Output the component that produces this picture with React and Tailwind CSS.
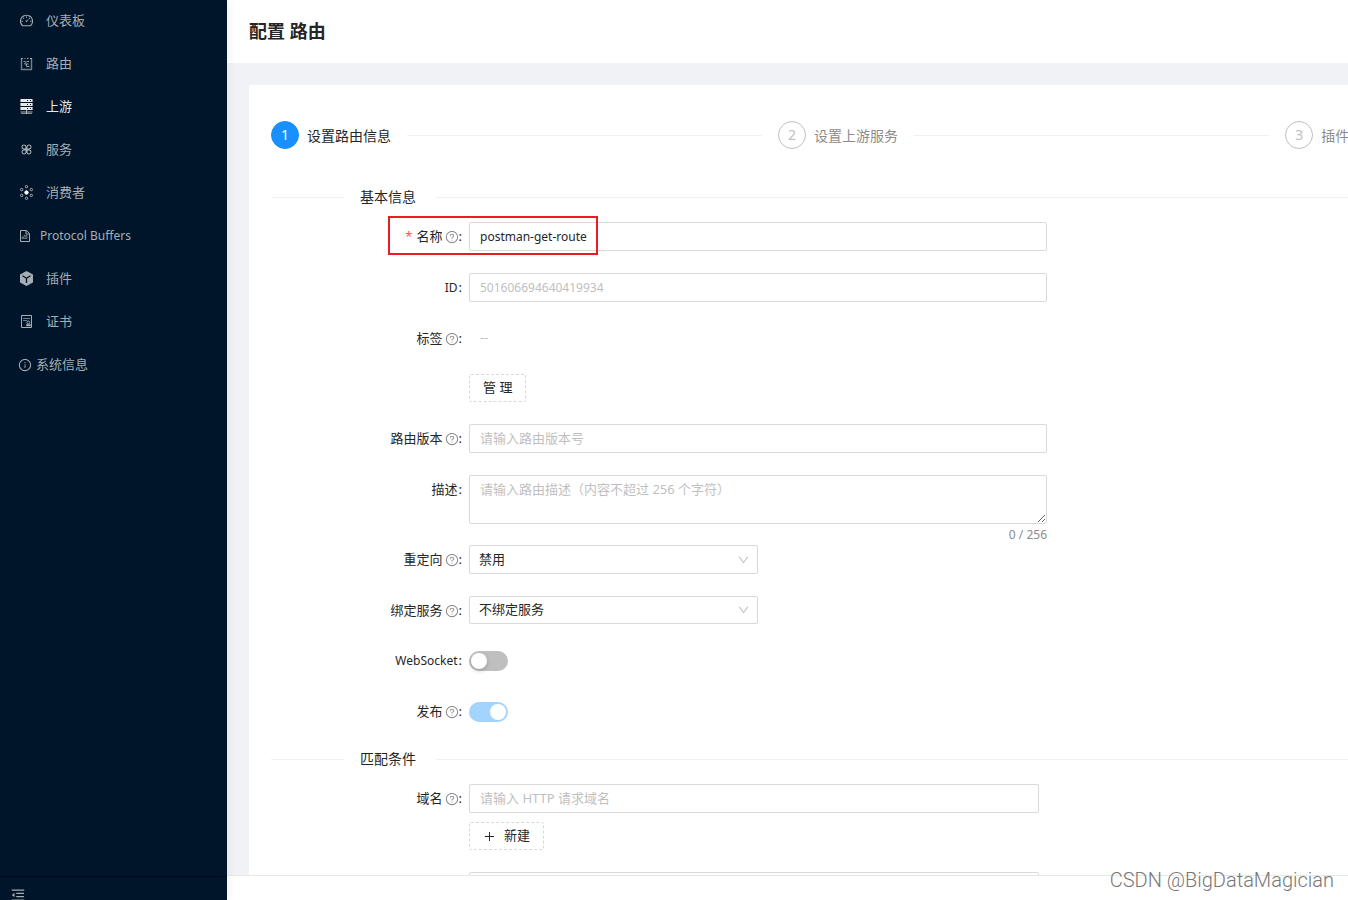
import { useState } from 'react'
import {
    AiOutlineDashboard,
    AiOutlineDown,
    AiOutlineInfoCircle,
    AiOutlineMenuFold,
    AiOutlinePlus,
    AiOutlineQuestionCircle,
} from 'react-icons/ai'

const inputClass = 'block h-[29px] w-full rounded-xs border border-[#d9d9d9] bg-white px-2.5 text-[#262626] placeholder-[#bfbfbf] outline-none focus:border-[#40a9ff]'

function RouteIcon() {
    return (
        <svg width="13" height="14" viewBox="0 0 13 14" fill="none" stroke="currentColor">
            <path d="M1.5 1v12M11.5 1v12M1 12.500h11" strokeWidth="1.4" opacity="0.7" />
            <path d="M1 1.5h2M4.500 1.500h1M7 1.5h1.500M10 1.5h2" />
            <path d="M9 4.5H7L4.500 7H8.500M6.500 7v2.5h3M3.500 4.5h2" strokeWidth="0.9" />
        </svg>
    )
}

function UpstreamIcon() {
    return (
        <svg width="13" height="16" viewBox="0 0 13 16" fill="currentColor">
            <path fillRule="evenodd" d="M1 0h11a.6.6 0 0 1 .6.6V3H.4V.6A.6.6 0 0 1 1 0zM7 1v1h1V1zM10 1v1h1V1z" />
            <path fillRule="evenodd" d="M.4 4h12.200v3H.4zM7 5v1h1V5zM10 5v1h1V5z" />
            <path fillRule="evenodd" d="M.4 8h12.200v3H.4zM7 9v1h1V9zM10 9v1h1V9z" />
            <path d="M6 11h1v1.600h5.500v.8H7v1.100H6v-1.100H.5v-.8H6zM1 14.200h11v.8H1z" opacity="0.75" />
        </svg>
    )
}

function ServiceIcon() {
    return (
        <svg width="13" height="13" viewBox="0 0 13 13" fill="none" stroke="currentColor" strokeWidth="1.1">
            <path d="M6 6H3.700A2 2 0 1 1 6 4zM7 6V4a2 2 0 1 1 2.300 2zM6 7v2.300A2 2 0 1 1 3.700 7zM7 7h2.300A2 2 0 1 1 7 9.300z" />
        </svg>
    )
}

function ConsumerIcon() {
    return (
        <svg width="13" height="15" viewBox="0 0 13 15" fill="none" stroke="currentColor" strokeWidth="1">
            <circle cx="6.500" cy="7.500" r="1.700" fill="#fff" stroke="#fff" />
            <circle cx="6.500" cy="1.700" r="1.200" />
            <circle cx="6.500" cy="13.300" r="1.200" />
            <circle cx="1.700" cy="4.600" r="1.200" />
            <circle cx="11.300" cy="4.600" r="1.200" />
            <circle cx="1.700" cy="10.400" r="1.200" />
            <circle cx="11.300" cy="10.400" r="1.200" />
        </svg>
    )
}

function ProtoIcon() {
    return (
        <svg width="10" height="12" viewBox="0 0 10 12" fill="none" stroke="currentColor">
            <path d="M.5.5h6l3 3v8h-9z" />
            <path d="M6 .5V4h3.500" />
            <path d="M2 8.500V7h2V5.500h3v3H2" fill="currentColor" fillOpacity="0.3" strokeOpacity="0.5" />
        </svg>
    )
}

function PluginIcon() {
    return (
        <svg width="13" height="15" viewBox="0 0 13 15">
            <path d="M6.500 0 13 3.500v8L6.500 15 0 11.500v-8z" fill="currentColor" />
            <path d="M2.500 4.800 6.500 7.200l4-2.400M6.500 7.200V12" fill="none" stroke="#001529" strokeWidth="1.3" />
        </svg>
    )
}

function CertIcon() {
    return (
        <svg width="13" height="13" viewBox="0 0 13 13" fill="none" stroke="currentColor">
            <path d="M1.500.5h10v12h-10z" />
            <path d="M3 3.500h7M3 5.500h4" opacity="0.7" />
            <circle cx="8.300" cy="7.500" r="1.400" />
            <path d="M6.500 9.500h4V11h-4z" fill="currentColor" strokeWidth="0.5" />
        </svg>
    )
}

const menu = [
    { name: '仪表板', icon: <AiOutlineDashboard size={15} />, style: 'gap-3 -ml-px text-[13px]' },
    { name: '路由', icon: <RouteIcon /> },
    { name: '上游', icon: <UpstreamIcon />, active: true },
    { name: '服务', icon: <ServiceIcon /> },
    { name: '消费者', icon: <ConsumerIcon /> },
    { name: 'Protocol Buffers', icon: <ProtoIcon />, style: 'gap-2.5 text-xs' },
    { name: '插件', icon: <PluginIcon /> },
    { name: '证书', icon: <CertIcon /> },
    { name: '系统信息', icon: <AiOutlineInfoCircle size={14} />, style: 'gap-1 -ml-0.5 text-[13px]' },
]

const steps = ['设置路由信息', '设置上游服务', '插件配置']

function Sidebar() {
    return (
        <aside className="relative z-10 flex w-[227px] shrink-0 flex-col bg-[#001529] text-[#a6adb4] shadow-[2px_0_8px_rgba(29,35,41,0.06)]">
            <nav className="flex flex-1 flex-col gap-1.5 pt-0.5 pl-5">
                {menu.map((item) => (
                    <a
                        key={item.name}
                        href="#"
                        className={`flex h-[37px] items-center hover:text-white ${item.style || 'gap-[13px] text-[13px]'} ${item.active ? 'text-[#e6e8ea]' : ''}`}
                    >
                        {item.icon}
                        <span>{item.name}</span>
                    </a>
                ))}
            </nav>
            <div className="h-6 overflow-hidden border-t border-[#000c17] pt-2.5 pl-2.5">
                <button type="button" aria-label="收起菜单" className="block">
                    <AiOutlineMenuFold size={16} />
                </button>
            </div>
        </aside>
    )
}

function Steps() {
    return (
        <ol className="flex gap-4 overflow-hidden">
            {steps.map((title, i) => (
                <li key={title} className="flex basis-[45.6%] shrink-0 items-center">
                    <span className={`flex size-7 items-center justify-center rounded-full border text-sm ${i === 0 ? 'border-[#1890ff] bg-[#1890ff] text-white' : 'border-[#bfbfbf] text-[#bfbfbf]'}`}>
                        {i + 1}
                    </span>
                    <span className={`ml-2 pt-0.5 text-sm ${i === 0 ? 'text-[#262626]' : 'text-[#8c8c8c]'}`}>{title}</span>
                    <span className="ml-4 h-px flex-1 bg-[#f0f0f0]" />
                </li>
            ))}
        </ol>
    )
}

function Section({ title, children }) {
    return (
        <section>
            <div className="mb-3.5 flex items-center">
                <span className="h-px w-[73px] bg-[#f0f0f0]" />
                <h2 className="mr-5 ml-4 text-sm leading-[22px] text-[#262626]">{title}</h2>
                <span className="h-px flex-1 bg-[#f0f0f0]" />
            </div>
            {children}
        </section>
    )
}

function Field({ label, id, tip, required, children, small }) {
    return (
        <div className="relative mb-[22px] flex">
            <div className="flex h-7 w-[198px] shrink-0 items-center justify-end pt-0.5 pr-[7px] text-[13px] text-[#262626]">
                {required && <span className="mr-1 text-[#ff4d4f]">*</span>}
                {label && <label htmlFor={id} className={small ? 'text-xs' : ''}>{label}</label>}
                {tip && <AiOutlineQuestionCircle size={14} className="ml-0.5 text-[#8c8c8c]" />}
                {label && <span className={tip ? '' : 'ml-px'}>:</span>}
            </div>
            <div className="max-w-[578px] flex-1">{children}</div>
            {required && <div className="pointer-events-none absolute -top-1.5 left-[117px] h-[39px] w-[210px] border-2 border-[#ed1c24]" />}
        </div>
    )
}

function Select({ id, options, height }) {
    return (
        <div className="relative w-1/2">
            <select
                id={id}
                className={`block w-full appearance-none rounded-xs border border-[#d9d9d9] bg-white px-[9px] text-[13px] text-[#262626] outline-none ${height}`}
            >
                {options.map((option) => <option key={option}>{option}</option>)}
            </select>
            <AiOutlineDown size={13} className="pointer-events-none absolute top-1/2 right-2 -translate-y-1/2 text-[#bfbfbf]" />
        </div>
    )
}

function Switch({ id, ...props }) {
    return (
        <div className="flex h-[29px] items-center">
            <input
                id={id}
                type="checkbox"
                role="switch"
                className="relative h-5 w-[39px] appearance-none rounded-full bg-[#bfbfbf] before:absolute before:top-0.5 before:left-0.5 before:size-4 before:rounded-full before:bg-white before:shadow-[0_2px_4px_rgba(0,35,11,0.2)] checked:bg-[#1890ff] checked:before:left-[21px] disabled:bg-[#a3d3ff] disabled:before:shadow-none"
                {...props}
            />
        </div>
    )
}

export default function App() {
    const [name, setName] = useState('postman-get-route')
    const [desc, setDesc] = useState('')

    return (
        <div className="relative flex h-screen overflow-hidden bg-[#f0f2f5] font-['Noto_Sans','Noto_Sans_CJK_SC',sans-serif]">
            <Sidebar />

            <div className="flex min-w-0 flex-1 flex-col">
                <header className="flex h-[63px] shrink-0 items-center bg-white px-[22px] pb-0.5">
                    <h1 className="text-lg font-bold text-[#262626]">配置 路由</h1>
                </header>

                <main className="min-h-0 flex-1 overflow-hidden pt-[22px] pl-[22px]">
                    <div className="bg-white pt-9 pl-[22px]">
                        <Steps />

                        <form className="pt-[37px]">
                            <Section title="基本信息">
                                <Field label="名称" id="name" tip required>
                                    <input id="name" className={`${inputClass} text-xs`} value={name} onChange={(e) => setName(e.target.value)} />
                                </Field>
                                <Field label="ID" id="route-id" small>
                                    <input id="route-id" className={`${inputClass} text-xs`} placeholder="501606694640419934" />
                                </Field>
                                <Field label="标签" tip>
                                    <div className="flex h-7 items-center px-[11px] text-[13px] text-[#bfbfbf]">--</div>
                                </Field>
                                <Field>
                                    <button type="button" className="h-7 rounded-xs border border-dashed border-[#d9d9d9] bg-white px-[13px] text-[13px] text-[#262626]">管 理</button>
                                </Field>
                                <Field label="路由版本" id="version" tip>
                                    <input id="version" className={`${inputClass} pb-0.5 text-[13px]`} placeholder="请输入路由版本号" />
                                </Field>
                                <Field label="描述" id="desc">
                                    <textarea
                                        id="desc"
                                        maxLength={256}
                                        className="block h-[49px] w-full rounded-xs border border-[#d9d9d9] px-2.5 py-[3px] text-[13px] leading-5 text-[#262626] placeholder-[#bfbfbf] outline-none"
                                        placeholder="请输入路由描述（内容不超过 256 个字符）"
                                        value={desc}
                                        onChange={(e) => setDesc(e.target.value)}
                                    />
                                    <div className="-mb-[22px] h-[21px] text-right text-xs leading-[21px] text-[#8c8c8c]">{desc.length} / 256</div>
                                </Field>
                                <Field label="重定向" id="redirect" tip>
                                    <Select id="redirect" options={['禁用', '启用 HTTPS', '自定义']} height="h-[29px]" />
                                </Field>
                                <Field label="绑定服务" id="service" tip>
                                    <Select id="service" options={['不绑定服务']} height="h-7" />
                                </Field>
                                <Field label="WebSocket" id="websocket" small>
                                    <Switch id="websocket" />
                                </Field>
                                <Field label="发布" id="publish" tip>
                                    <Switch id="publish" defaultChecked disabled />
                                </Field>
                            </Section>

                            <Section title="匹配条件">
                                <Field label="域名" id="host" tip>
                                    <div className="pr-2">
                                        <input id="host" className={`${inputClass} pb-0.5 text-[13px]`} placeholder="请输入 HTTP 请求域名" />
                                    </div>
                                    <button type="button" className="mt-[9px] flex h-7 items-center gap-2 rounded-xs border border-dashed border-[#d9d9d9] bg-white px-[13px] text-[13px] text-[#262626]">
                                        <AiOutlinePlus size={13} />
                                        新建
                                    </button>
                                </Field>
                                <Field>
                                    <div className="pr-2">
                                        <input aria-label="路径" className={`${inputClass} text-[13px]`} />
                                    </div>
                                </Field>
                            </Section>
                        </form>
                    </div>
                </main>

                <footer className="h-[25px] shrink-0 border-t border-[#e8e8e8] bg-white" />
            </div>

            <div className="pointer-events-none absolute right-3.5 bottom-1.5 z-20 font-['Roboto','Liberation_Sans',sans-serif] text-xl font-light text-[#777777]">
                CSDN @BigDataMagician
            </div>
        </div>
    )
}
